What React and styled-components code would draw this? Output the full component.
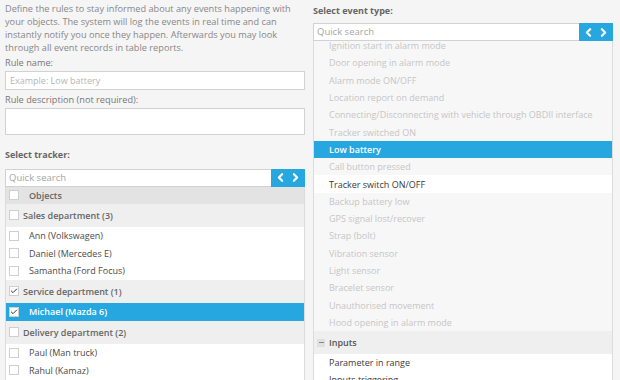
import React, { useEffect, useRef } from 'react';
import styled, { createGlobalStyle } from 'styled-components';
import { ChevronLeft, ChevronRight, Check } from 'lucide-react';

const GlobalStyle = createGlobalStyle`
    html, body {
        margin: 0;
        padding: 0;
        background: #f5f5f5;
        font-family: "Open Sans", "DejaVu Sans", sans-serif;
        font-size: 9px;
        color: #555;
        overflow: hidden;
    }
    * {
        box-sizing: border-box;
    }
`;

const Page = styled.div`
    display: grid;
    grid-template-columns: 300px 300px;
    column-gap: 8px;
    padding: 0 7px 0 5px;
    height: 380px;
    overflow: hidden;
`;

const Column = styled.div`
    display: flex;
    flex-direction: column;
    padding-top: ${(p) => p.$top}px;
    min-height: 0;
`;

const Intro = styled.p`
    margin: 0;
    line-height: 13px;
    font-size: 9.2px;
    color: #888;
`;

const Label = styled.div`
    margin-top: ${(p) => p.$mt || 0}px;
    line-height: 13px;
    font-size: 9.2px;
    color: #777;
`;

const Heading = styled.div`
    margin-top: ${(p) => p.$mt || 0}px;
    line-height: 13px;
    font-weight: 700;
    color: #666;
`;

const TextInput = styled.div`
    margin-top: 2px;
    height: ${(p) => p.$h}px;
    background: #fff;
    border: 1px solid #d2d2d2;
    padding: 0 4px;
    line-height: 17px;
    color: #b5b5b5;
`;

const SearchBar = styled.div`
    margin-top: ${(p) => p.$mt}px;
    display: flex;
    height: 18px;
    flex-shrink: 0;
`;

const SearchField = styled.div`
    flex: 1;
    background: #fff;
    border: 1px solid #d2d2d2;
    border-right: none;
    padding-left: 3px;
    line-height: 16px;
    font-size: 9.5px;
    color: #a5a5a5;
`;

const ArrowButton = styled.div`
    width: 34px;
    background: #27a7e0;
    display: flex;
    align-items: center;
    justify-content: center;
    gap: 2px;
    color: #fff;
`;

const List = styled.div`
    flex: 1;
    min-height: 0;
    overflow: hidden;
    border: 1px solid #dcdcdc;
    border-top: none;
    border-bottom: none;
    background: ${(p) => p.$bg || '#fff'};
`;

const TrackerRow = styled.div`
    display: flex;
    align-items: center;
    height: ${(p) => (p.$kind === 'item' ? 17.5 : p.$kind === 'head' ? 17 : 23.5)}px;
    padding-left: 3px;
    background: ${(p) =>
        p.$active ? '#27a7e0' : p.$kind === 'head' ? '#e3e3e3' : p.$kind === 'group' ? '#efefef' : '#fff'};
    color: ${(p) => (p.$active ? '#fff' : p.$kind === 'item' ? '#4a4a4a' : '#666')};
    font-weight: ${(p) => (p.$kind === 'item' && !p.$active ? 400 : 600)};
`;

const Box = styled.span`
    width: 10px;
    height: 10px;
    flex-shrink: 0;
    background: #fff;
    border: 1px solid #cfcfcf;
    display: flex;
    align-items: center;
    justify-content: center;
    color: #333;
    margin-right: ${(p) => p.$gap}px;
`;

const EventRow = styled.div`
    height: ${(p) => (p.$group ? 23 : 17.3)}px;
    display: flex;
    align-items: center;
    padding-left: ${(p) => (p.$group ? 3 : 15)}px;
    background: ${(p) => (p.$active ? '#27a7e0' : p.$group ? '#efefef' : p.$enabled ? '#fff' : 'transparent')};
    color: ${(p) => (p.$active ? '#fff' : p.$group ? '#555' : p.$enabled ? '#3a3a3a' : '#c6c6c6')};
    font-weight: ${(p) => (p.$active || p.$group ? 600 : 400)};
    font-size: 9px;
`;

const Collapse = styled.span`
    width: 8px;
    height: 8px;
    margin-right: 4px;
    background: #e0e0e0;
    display: flex;
    align-items: center;
    justify-content: center;

    &::after {
        content: '';
        width: 5px;
        height: 1px;
        background: #888;
    }
`;

const trackers = [
    { kind: 'head', label: 'Objects' },
    { kind: 'group', label: 'Sales department (3)' },
    { kind: 'item', label: 'Ann (Volkswagen)' },
    { kind: 'item', label: 'Daniel (Mercedes E)' },
    { kind: 'item', label: 'Samantha (Ford Focus)' },
    { kind: 'group', label: 'Service department (1)', checked: true },
    { kind: 'item', label: 'Michael (Mazda 6)', checked: true, active: true },
    { kind: 'group', label: 'Delivery department (2)' },
    { kind: 'item', label: 'Paul (Man truck)' },
    { kind: 'item', label: 'Rahul (Kamaz)' },
];

const events = [
    { label: 'Ignition start in alarm mode' },
    { label: 'Door opening in alarm mode' },
    { label: 'Alarm mode ON/OFF' },
    { label: 'Location report on demand' },
    { label: 'Connecting/Disconnecting with vehicle through OBDII interface' },
    { label: 'Tracker switched ON' },
    { label: 'Low battery', active: true },
    { label: 'Call button pressed' },
    { label: 'Tracker switch ON/OFF', enabled: true },
    { label: 'Backup battery low' },
    { label: 'GPS signal lost/recover' },
    { label: 'Strap (bolt)' },
    { label: 'Vibration sensor' },
    { label: 'Light sensor' },
    { label: 'Bracelet sensor' },
    { label: 'Unauthorised movement' },
    { label: 'Hood opening in alarm mode' },
    { label: 'Inputs', group: true },
    { label: 'Parameter in range', enabled: true },
    { label: 'Inputs triggering', enabled: true },
    { label: 'Input ON/OFF', enabled: true },
];

const Search = ({ mt }) => (
    <SearchBar $mt={mt}>
        <SearchField>Quick search</SearchField>
        <ArrowButton>
            <ChevronLeft size={13} strokeWidth={4} />
            <ChevronRight size={13} strokeWidth={4} />
        </ArrowButton>
    </SearchBar>
);

const App = () => {
    const eventsRef = useRef(null);

    useEffect(() => {
        if (eventsRef.current) eventsRef.current.scrollTop = 4;
    }, []);

    return (
        <>
            <GlobalStyle />
            <Page>
                <Column $top={2}>
                    <Intro>
                        Define the rules to stay informed about any events happening with your objects. The
                        system will log the events in real time and can instantly notify you once they happen.
                        Afterwards you may look through all event records in table reports.
                    </Intro>
                    <Label $mt={2}>Rule name:</Label>
                    <TextInput $h={19}>Example: Low battery</TextInput>
                    <Label $mt={2.5}>Rule description (not required):</Label>
                    <TextInput $h={27} />
                    <Heading $mt={13.5}>Select tracker:</Heading>
                    <Search mt={7.5} />
                    <List>
                        {trackers.map((t) => (
                            <TrackerRow key={t.label} $kind={t.kind} $active={t.active}>
                                <Box $gap={t.kind === 'group' ? 4 : 10}>
                                    {t.checked && <Check size={8} strokeWidth={3} />}
                                </Box>
                                {t.label}
                            </TrackerRow>
                        ))}
                    </List>
                </Column>
                <Column $top={4}>
                    <Heading>Select event type:</Heading>
                    <Search mt={6} />
                    <List $bg="#f7f7f7" ref={eventsRef}>
                        {events.map((e) => (
                            <EventRow key={e.label} $group={e.group} $active={e.active} $enabled={e.enabled}>
                                {e.group && <Collapse />}
                                {e.label}
                            </EventRow>
                        ))}
                    </List>
                </Column>
            </Page>
        </>
    );
};

export default App;
